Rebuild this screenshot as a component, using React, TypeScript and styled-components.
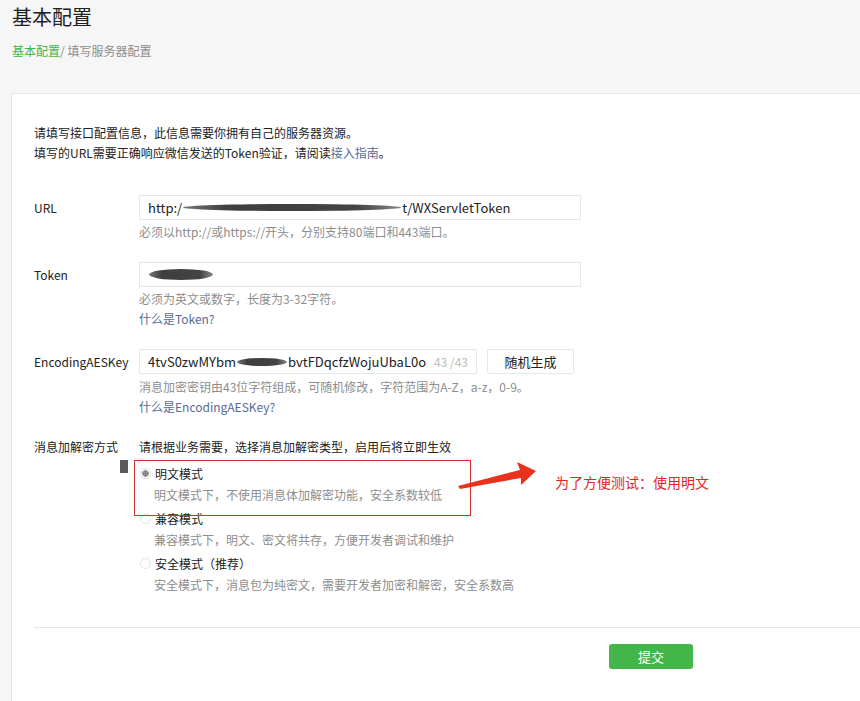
import React from "react";
import styled, { createGlobalStyle } from "styled-components";

const Global = createGlobalStyle`
  html, body { margin: 0; padding: 0; background: #f6f6f6; overflow: hidden; }
  body { font-family: "Noto Sans CJK SC", "Noto Sans", sans-serif; color: #222; }
  * { box-sizing: border-box; }
`;

const Page = styled.div`
  width: 860px;
  height: 701px;
  overflow: hidden;
`;

const Header = styled.div`
  padding: 3px 12px 0;
`;

const Title = styled.h2`
  margin: 0;
  font-size: 20px;
  line-height: 28px;
  font-weight: 400;
  color: #222;
`;

const Crumbs = styled.div`
  margin-top: 10px;
  font-size: 12px;
  line-height: 20px;
  color: #8d8d8d;
`;

const CrumbLink = styled.span`
  color: #44b549;
`;

const Panel = styled.div`
  margin: 32px 0 0 11px;
  background: #fff;
  border: 1px solid #e7e7eb;
  border-right: none;
  padding: 29px 0 40px 22px;
  min-height: 700px;
`;

const Intro = styled.p`
  margin: 0 0 32px;
  font-size: 12px;
  line-height: 20px;
  color: #222;
`;

const Link = styled.a`
  color: #576b95;
  text-decoration: none;
`;

const Row = styled.div<{ $gap?: number }>`
  display: grid;
  grid-template-columns: 105px 1fr;
  margin-bottom: ${(p) => p.$gap ?? 20}px;
`;

const Label = styled.label<{ $lh?: number }>`
  font-size: 12px;
  line-height: ${(p) => p.$lh ?? 25}px;
  color: #222;
`;

const Field = styled.div``;

const InputLine = styled.div`
  display: flex;
  align-items: center;
  gap: 10px;
`;

const Input = styled.div<{ $w: number }>`
  width: ${(p) => p.$w}px;
  height: 25px;
  border: 1px solid #e4e8eb;
  background: #fff;
  padding: 0 8px;
  display: flex;
  align-items: center;
  font-size: 13px;
  color: #222;
  white-space: nowrap;
  overflow: hidden;
`;

const Counter = styled.span`
  margin-left: auto;
  color: #bdbdbd;
  font-size: 12px;
`;

const Blob = styled.span<{ $w: number; $h: number }>`
  display: inline-block;
  width: ${(p) => p.$w}px;
  height: ${(p) => p.$h}px;
  border-radius: 50%;
  background: linear-gradient(90deg, #777 0%, #3e3e3e 20%, #444 80%, #888 100%);
  filter: blur(0.6px);
  margin: 0 1px;
  flex-shrink: 0;
`;

const Button = styled.button`
  width: 87px;
  height: 25px;
  border: 1px solid #e4e8eb;
  background: #fff;
  border-radius: 2px;
  font-family: inherit;
  font-size: 13px;
  color: #222;
  padding: 0;
`;

const Hint = styled.div<{ $top?: number }>`
  margin-top: ${(p) => p.$top ?? 2}px;
  font-size: 12px;
  line-height: 20px;
  color: #8d8d8d;
`;

const HelpLink = styled(Link)`
  display: block;
  font-size: 12px;
  line-height: 20px;
`;

const Desc = styled.div`
  font-size: 12px;
  line-height: 20px;
  color: #222;
`;

const Group = styled.div`
  position: relative;
  padding-top: 6px;
`;

const Item = styled.div`
  margin-bottom: 3px;
`;

const ItemHead = styled.div`
  display: flex;
  align-items: center;
  gap: 4px;
  font-size: 12px;
  line-height: 21px;
  color: #222;
`;

const Radio = styled.span<{ $on?: boolean }>`
  width: 11px;
  height: 11px;
  margin-left: 1px;
  border-radius: 50%;
  border: 1px solid ${(p) => (p.$on ? "#d8d8d8" : "#e3e3e3")};
  background: ${(p) => (p.$on ? "radial-gradient(circle, #8a8a8a 0 3px, #fff 3.5px)" : "#fff")};
`;

const ItemDesc = styled.div`
  padding-left: 15px;
  font-size: 12px;
  line-height: 21px;
  color: #8d8d8d;
`;

const RedBox = styled.div`
  position: absolute;
  left: -5px;
  top: 3px;
  width: 337px;
  height: 56px;
  border: 1px solid #d3302a;
  pointer-events: none;
`;

const Marker = styled.div`
  position: absolute;
  left: -19px;
  top: 3px;
  width: 8px;
  height: 13px;
  background: #5a5a5a;
`;

const Arrow = styled.svg`
  position: absolute;
  left: 316px;
  top: 1px;
`;

const Note = styled.div`
  position: absolute;
  left: 416px;
  top: 15px;
  font-size: 14px;
  line-height: 20px;
  color: #e1251b;
  white-space: nowrap;
`;

const Divider = styled.div`
  margin-top: 29px;
  border-top: 1px solid #e7e7eb;
`;

const Actions = styled.div`
  padding: 15px 0 0 575px;
`;

const Submit = styled.button`
  width: 84px;
  height: 25px;
  border: none;
  border-radius: 3px;
  background: #44b549;
  color: #fff;
  font-family: inherit;
  font-size: 13px;
  padding: 0;
`;

export default function App() {
  return (
    <Page>
      <Global />
      <Header>
        <Title>基本配置</Title>
        <Crumbs>
          <CrumbLink>基本配置</CrumbLink>/ 填写服务器配置
        </Crumbs>
      </Header>
      <Panel>
        <Intro>
          请填写接口配置信息，此信息需要你拥有自己的服务器资源。
          <br />
          填写的URL需要正确响应微信发送的Token验证，请阅读<Link href="#">接入指南</Link>。
        </Intro>

        <Row>
          <Label>URL</Label>
          <Field>
            <Input $w={442}>
              http:/<Blob $w={218} $h={7} />t/WXServletToken
            </Input>
            <Hint>必须以http://或https://开头，分别支持80端口和443端口。</Hint>
          </Field>
        </Row>

        <Row>
          <Label>Token</Label>
          <Field>
            <Input $w={442}>
              <Blob $w={64} $h={11} />
            </Input>
            <Hint>必须为英文或数字，长度为3-32字符。</Hint>
            <HelpLink href="#">什么是Token?</HelpLink>
          </Field>
        </Row>

        <Row>
          <Label>EncodingAESKey</Label>
          <Field>
            <InputLine>
              <Input $w={338}>
                4tvS0zwMYbm<Blob $w={50} $h={8} />bvtFDqcfzWojuUbaL0o
                <Counter>43 /43</Counter>
              </Input>
              <Button>随机生成</Button>
            </InputLine>
            <Hint $top={3}>消息加密密钥由43位字符组成，可随机修改，字符范围为A-Z，a-z，0-9。</Hint>
            <HelpLink href="#">什么是EncodingAESKey?</HelpLink>
          </Field>
        </Row>

        <Row $gap={0}>
          <Label $lh={20}>消息加解密方式</Label>
          <Field>
            <Desc>请根据业务需要，选择消息加解密类型，启用后将立即生效</Desc>
            <Group>
              <Item>
                <ItemHead>
                  <Radio $on />
                  明文模式
                </ItemHead>
                <ItemDesc>明文模式下，不使用消息体加解密功能，安全系数较低</ItemDesc>
              </Item>
              <Item>
                <ItemHead>
                  <Radio />
                  兼容模式
                </ItemHead>
                <ItemDesc>兼容模式下，明文、密文将共存，方便开发者调试和维护</ItemDesc>
              </Item>
              <Item>
                <ItemHead>
                  <Radio />
                  安全模式（推荐）
                </ItemHead>
                <ItemDesc>安全模式下，消息包为纯密文，需要开发者加密和解密，安全系数高</ItemDesc>
              </Item>
              <RedBox />
              <Marker />
              <Arrow width="90" height="40" viewBox="0 0 90 40">
                <polygon
                  points="3,28 65,12 62,4 81,13 66,27 66,20 5,31"
                  fill="#e8321c"
                />
              </Arrow>
              <Note>为了方便测试：使用明文</Note>
            </Group>
          </Field>
        </Row>

        <Divider />
        <Actions>
          <Submit>提交</Submit>
        </Actions>
      </Panel>
    </Page>
  );
}
